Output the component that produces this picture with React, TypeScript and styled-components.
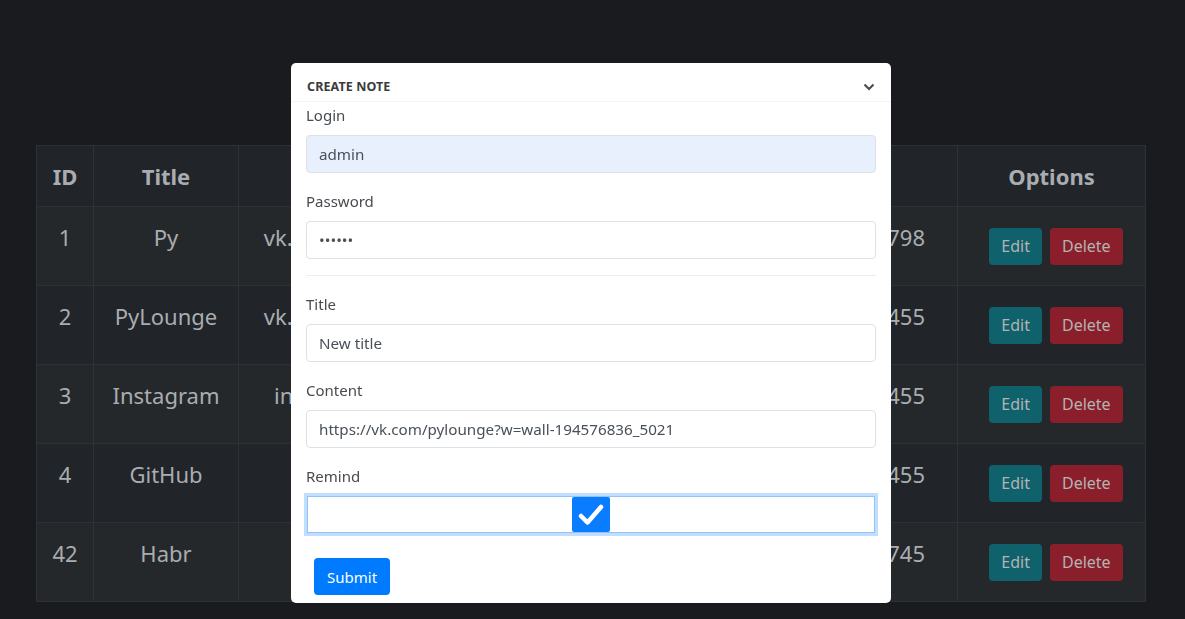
import styled, { createGlobalStyle } from "styled-components";

const GlobalStyle = createGlobalStyle`
  html, body {
    margin: 0;
    background: #1a1b1f;
    font-family: "Noto Sans", "Open Sans", Arial, sans-serif;
  }
  * {
    box-sizing: border-box;
  }
`;

type Note = {
  id: number;
  title: string;
  content: string;
  date: string;
};

const notes: Note[] = [
  { id: 1, title: "Py", content: "vk.com/wall-19457683_5021", date: "1621174531.798" },
  { id: 2, title: "PyLounge", content: "vk.com/wall-19457683_5022", date: "1621264113.455" },
  { id: 3, title: "Instagram", content: "instagram.com/pylounge_", date: "1621264113.455" },
  { id: 4, title: "GitHub", content: "github.com/pylounge", date: "1621264113.455" },
  { id: 42, title: "Habr", content: "habr.com", date: "1621264113.745" },
];

const Page = styled.div`
  padding: 145px 39px 18px 36px;
  min-height: 619px;
`;

const Table = styled.table`
  width: 1109px;
  table-layout: fixed;
  border-collapse: collapse;
  color: #a9adb1;
  font-size: 22px;
  text-align: center;
  th,
  td {
    border: 1px solid #2e3236;
    padding: 12px;
    line-height: 36px;
    vertical-align: top;
    white-space: nowrap;
  }
  th {
    font-weight: 700;
    background: #212428;
  }
  tbody tr {
    height: 79px;
  }
  tbody tr:nth-child(odd) {
    background: #25282b;
  }
  tbody tr:nth-child(even) {
    background: #212428;
  }
`;

const DateCell = styled.td`
  && {
    text-align: right;
    padding-right: 32px;
  }
`;

const OptionsCell = styled.td`
  && {
    vertical-align: middle;
    padding: 0 12px;
  }
`;

const Actions = styled.div`
  display: flex;
  justify-content: center;
  gap: 8px;
  padding-left: 9px;
`;

const ActionButton = styled.button<{ $variant: "edit" | "delete" }>`
  font-family: inherit;
  font-size: 16px;
  line-height: 24px;
  padding: 6px 12px;
  height: 37px;
  border: none;
  border-radius: 4px;
  color: #b3b3b3;
  background: ${({ $variant }) => ($variant === "edit" ? "#0f616c" : "#8a1f2b")};
`;

const Overlay = styled.div`
  position: fixed;
  inset: 0;
  display: flex;
  align-items: flex-start;
  justify-content: flex-start;
  padding: 63px 0 0 291px;
`;

const Modal = styled.div`
  width: 600px;
  height: 540px;
  background: #fff;
  border-radius: 5px;
  display: flex;
  flex-direction: column;
`;

const ModalHeader = styled.div`
  height: 39px;
  flex-shrink: 0;
  padding: 0 16px;
  display: flex;
  align-items: center;
  justify-content: space-between;
  border-bottom: 1px solid #f3f3f3;
  h3 {
    margin: 8px 0 0;
    font-size: 12.5px;
    font-weight: 700;
    color: #3b3b3b;
    letter-spacing: 0.1px;
  }
  svg {
    margin-top: 10px;
  }
`;

const Form = styled.form`
  padding: 1px 15px 8px;
  display: flex;
  flex-direction: column;
`;

const Group = styled.div`
  margin-bottom: 16px;
  display: flex;
  flex-direction: column;
`;

const Label = styled.label`
  font-size: 15px;
  line-height: 24px;
  color: #474b4f;
  margin-bottom: 8px;
`;

const Input = styled.input<{ $autofill?: boolean }>`
  height: 38px;
  width: 100%;
  padding: 6px 12px;
  font-family: inherit;
  font-size: 15.2px;
  color: #495057;
  border: 1px solid #dde1e5;
  border-radius: 4px;
  background: ${({ $autofill }) => ($autofill ? "#e8f0fe" : "#fff")};
  outline: none;
`;

const Divider = styled.hr`
  margin: 0 0 16px;
  border: none;
  border-top: 1px solid #eceef0;
`;

const CheckField = styled.div`
  height: 37px;
  margin: 0 1px;
  border: 1px solid #90c4ff;
  box-shadow: 0 0 0 3px #c2deff;
  display: flex;
  align-items: center;
  justify-content: center;
`;

const CheckBox = styled.span`
  width: 38px;
  height: 35px;
  border-radius: 2px;
  background: #0a7cff;
  display: flex;
  align-items: center;
  justify-content: center;
`;

const SubmitButton = styled.button`
  align-self: flex-start;
  margin: 9px 0 0 8px;
  height: 37px;
  padding: 0 13px;
  font-family: inherit;
  font-size: 15px;
  color: #fff;
  background: #007bff;
  border: none;
  border-radius: 4px;
`;

export default function App() {
  return (
    <>
      <GlobalStyle />
      <Page>
        <Table>
          <colgroup>
            <col style={{ width: 57 }} />
            <col style={{ width: 145 }} />
            <col style={{ width: 341 }} />
            <col style={{ width: 378 }} />
            <col style={{ width: 188 }} />
          </colgroup>
          <thead>
            <tr>
              <th>ID</th>
              <th>Title</th>
              <th>Content</th>
              <th>Date</th>
              <th>Options</th>
            </tr>
          </thead>
          <tbody>
            {notes.map((n) => (
              <tr key={n.id}>
                <td>{n.id}</td>
                <td>{n.title}</td>
                <td>{n.content}</td>
                <DateCell>{n.date}</DateCell>
                <OptionsCell>
                  <Actions>
                    <ActionButton $variant="edit">Edit</ActionButton>
                    <ActionButton $variant="delete">Delete</ActionButton>
                  </Actions>
                </OptionsCell>
              </tr>
            ))}
          </tbody>
        </Table>
      </Page>
      <Overlay>
        <Modal>
          <ModalHeader>
            <h3>CREATE NOTE</h3>
            <svg width="12" height="8" viewBox="0 0 12 8">
              <path d="M1.5 1.5 6 6l4.5-4.5" fill="none" stroke="#4a4a4a" strokeWidth="2" />
            </svg>
          </ModalHeader>
          <Form onSubmit={(e) => e.preventDefault()}>
            <Group>
              <Label>Login</Label>
              <Input $autofill defaultValue="admin" />
            </Group>
            <Group>
              <Label>Password</Label>
              <Input type="password" defaultValue="123456" />
            </Group>
            <Divider />
            <Group>
              <Label>Title</Label>
              <Input defaultValue="New title" />
            </Group>
            <Group>
              <Label>Content</Label>
              <Input defaultValue="https://vk.com/pylounge?w=wall-194576836_5021" />
            </Group>
            <Group>
              <Label>Remind</Label>
              <CheckField>
                <CheckBox>
                  <svg width="26" height="22" viewBox="0 0 26 22">
                    <path d="M3 12l6.5 6.5L23 3" fill="none" stroke="#fff" strokeWidth="4.5" strokeLinecap="round" strokeLinejoin="round" />
                  </svg>
                </CheckBox>
              </CheckField>
            </Group>
            <SubmitButton type="submit">Submit</SubmitButton>
          </Form>
        </Modal>
      </Overlay>
    </>
  );
}
